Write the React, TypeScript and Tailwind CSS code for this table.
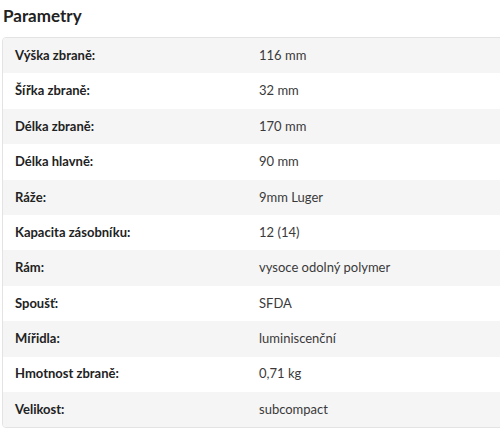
import React from 'react';

const rows: [string, string][] = [
  ['Výška zbraně:', '116 mm'],
  ['Šířka zbraně:', '32 mm'],
  ['Délka zbraně:', '170 mm'],
  ['Délka hlavně:', '90 mm'],
  ['Ráže:', '9mm Luger'],
  ['Kapacita zásobníku:', '12 (14)'],
  ['Rám:', 'vysoce odolný polymer'],
  ['Spoušť:', 'SFDA'],
  ['Mířidla:', 'luminiscenční'],
  ['Hmotnost zbraně:', '0,71 kg'],
  ['Velikost:', 'subcompact'],
];

export default function App() {
  return (
    <div className="w-[500px] h-[429px] overflow-hidden bg-white font-['Lato',sans-serif]">
      <h2 className="pl-[3px] pt-[3px] h-[37px] text-[17px] font-bold text-[#222]">Parametry</h2>
      <div className="ml-[2px] w-[520px] border border-[#e3e3e3] rounded-[4px] overflow-hidden">
        {rows.map(([label, value], i) => (
          <div key={label} className={`flex items-center h-[35.4px] text-[13px] ${i % 2 === 0 ? 'bg-[#f5f5f5]' : 'bg-white'}`}>
            <div className="w-[256px] pl-[12px] font-bold text-[#222]">{label}</div>
            <div className="text-[#3a3a3a]">{value}</div>
          </div>
        ))}
      </div>
    </div>
  );
}
